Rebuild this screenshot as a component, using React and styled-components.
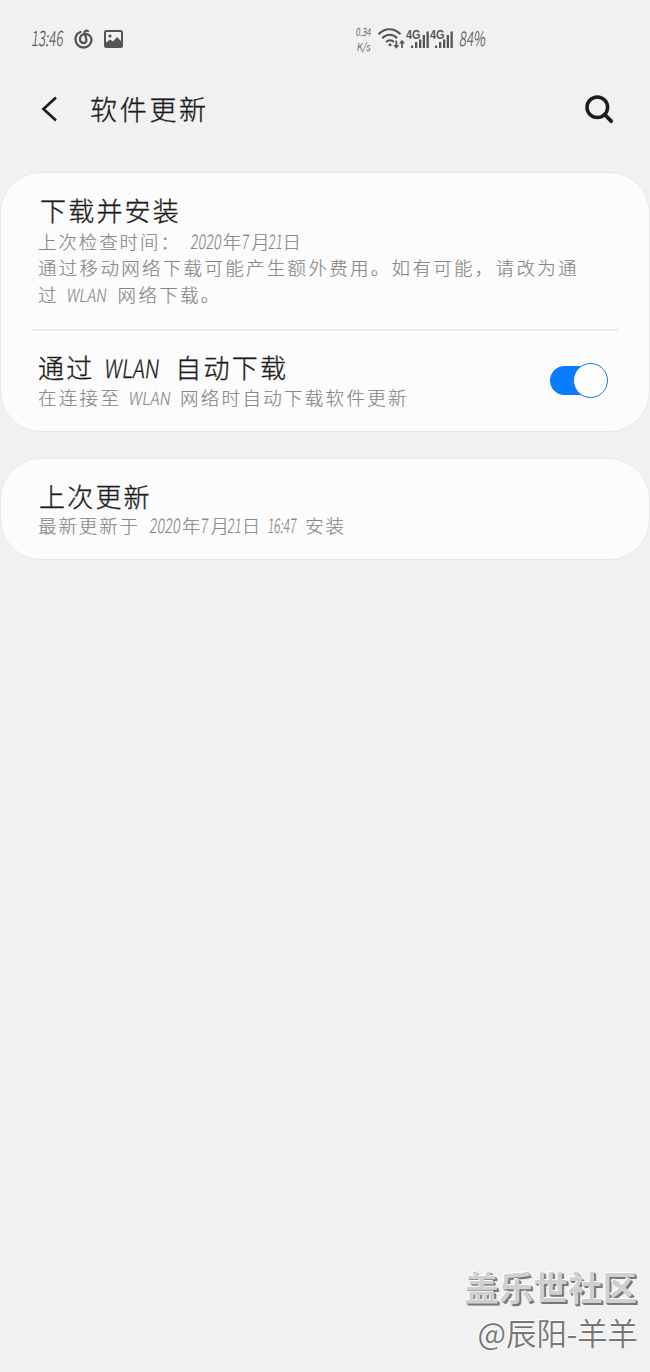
import React from 'react';
import styled, { createGlobalStyle } from 'styled-components';

const Global = createGlobalStyle`
  * { box-sizing: border-box; }
  body { margin: 0; background: #f1f1f1; }
`;

const Screen = styled.div`
  height: 1372px;
  width: 650px;
  display: flex;
  flex-direction: column;
  background: #f1f1f1;
  font-family: 'Noto Sans CJK SC', sans-serif;
  font-weight: 300;
  color: #1c1c1c;
  overflow: hidden;
`;

const StatusBar = styled.div`
  height: 78px;
  flex: none;
  display: flex;
  align-items: center;
  padding: 0 163px 0 32px;
  color: #555;
`;

const Clock = styled.div`
  padding-bottom: 4px;
  -webkit-text-stroke: 0.2px currentColor;
`;

const StatusIcons = styled.div`
  display: flex;
  align-items: center;
  margin-left: ${(p) => p.$left || 0}px;
  gap: ${(p) => p.$gap || 0}px;
`;

const Speed = styled.div`
  display: flex;
  flex-direction: column;
  align-items: center;
  width: 17px;
  margin-right: 7px;
  margin-left: auto;
  padding-bottom: 3px;
  line-height: 13px;
  -webkit-text-stroke: 0.15px currentColor;
`;

/* Narrow slanted run of Latin letters or digits, set in a box of fixed width */
const LatinBox = styled.span`
  display: inline-block;
  width: ${(p) => p.$w}px;
  margin: 0 ${(p) => p.$after || 0}px 0 ${(p) => p.$before || 0}px;
  white-space: nowrap;
  letter-spacing: 0;
`;
const LatinRun = styled.span`
  display: inline-block;
  font-size: ${(p) => p.$size}px;
  transform: scaleX(${(p) => p.$scale}) skewX(-9deg);
  transform-origin: left center;
`;
const Latin = ({ w, before, after, size, scale, children }) => (
  <LatinBox $w={w} $before={before} $after={after}>
    <LatinRun $size={size} $scale={scale}>{children}</LatinRun>
  </LatinBox>
);

const Header = styled.header`
  height: 94px;
  flex: none;
  display: flex;
  align-items: flex-start;
  padding: 15px 36px 0 41px;
`;

const IconButton = styled.button`
  display: flex;
  align-items: center;
  height: 32px;
  padding: 0;
  border: 0;
  background: none;
  color: #1c1c1c;
`;

const Heading = styled.h1`
  margin: 0 auto 0 32px;
  font-size: 27px;
  font-weight: 300;
  line-height: 32px;
  letter-spacing: 2.7px;
  -webkit-text-stroke: 0.35px currentColor;
`;

const Card = styled.section`
  flex: none;
  height: ${(p) => p.$height}px;
  margin-bottom: 26px;
  padding: ${(p) => p.$top}px 31px 0;
  border: 1px solid #e8e8e8;
  border-radius: 41px;
  background: #fcfcfc;
`;

const Row = styled.div`
  display: flex;
  align-items: flex-start;
  justify-content: space-between;
  padding: 0 10px 0 6px;
`;

const Title = styled.h2`
  margin: 0;
  padding-left: ${(p) => p.$indent || 0}px;
  font-size: 26px;
  font-weight: 300;
  line-height: 30px;
  height: ${(p) => p.$height || 32}px;
  letter-spacing: 2.2px;
  white-space: nowrap;
  -webkit-text-stroke: 0.35px currentColor;
`;

const Summary = styled.p`
  margin: 0;
  height: 27px;
  font-size: 18.5px;
  line-height: 27px;
  letter-spacing: ${(p) => p.$track || 2.3}px;
  color: #868686;
  white-space: nowrap;
  -webkit-text-stroke: 0.15px currentColor;
`;

const Divider = styled.div`
  height: 2px;
  margin: 21px 0;
  background: #ebebeb;
`;

const Switch = styled.div`
  width: 55px;
  height: 29px;
  margin: 14px 3px 0 0;
  border-radius: 15px;
  background: #0a7cff;
  display: flex;
  align-items: center;
  justify-content: flex-end;
`;
const Knob = styled.div`
  flex: none;
  width: 35px;
  height: 35px;
  margin-right: -3px;
  border: 1.5px solid #1678d8;
  border-radius: 50%;
  background: #fdfdfd;
`;

const Watermark = styled.footer`
  margin-top: auto;
  padding: 0 12px 17px 0;
  display: flex;
  flex-direction: column;
  align-items: flex-end;
  white-space: nowrap;
`;
const Community = styled.div`
  margin-right: 1px;
  font-size: 34.5px;
  line-height: 46px;
  font-weight: 700;
  color: #d0d0d0;
  text-shadow: -1px -1px 0 #fff, 1px 1px 0 #777, 2px 2px 0 #777;
`;
const Author = styled.div`
  font-size: 30.4px;
  line-height: 46px;
  font-weight: 350;
  color: #777;
  text-shadow: -1px -1px 0 #fff;
`;

const MusicIcon = () => (
  <svg width="19" height="20" viewBox="0 0 19 20" fill="none" stroke="currentColor" strokeWidth="2.300" strokeLinecap="round">
    <path d="M6.500 3C3.500 4 1.500 7 1.500 10.500c0 4.500 3.500 8 8 8s8-3.500 8-7.500c0-3.700-3-6-6.300-6-3.200 0-5.200 2.200-5.200 5.100 0 2.300 1.500 3.900 3.500 3.900s3.300-1.600 2.800-3.700L10.700 4c-.4-1.900 1.400-3.100 3.300-1.900" />
  </svg>
);
const PictureIcon = () => (
  <svg width="19" height="18" viewBox="0 0 19 18">
    <rect x="1" y="1" width="17" height="16" rx="1.500" fill="none" stroke="currentColor" strokeWidth="2" />
    <circle cx="6" cy="6" r="1.600" fill="currentColor" />
    <path d="M2 12.500l4-3 3 2L13 7l5 5v5H2z" fill="currentColor" />
  </svg>
);
const WifiIcon = () => (
  <svg width="26" height="22" viewBox="0 0 26 22" overflow="visible" fill="none" stroke="currentColor" strokeWidth="2">
    <path d="M-.5 6.300C6-.4 15-.4 21.500 6.300M3.300 10.200c4.300-4.500 10.500-4.500 14.800 0M7 14c2.300-2.500 5.700-2.500 8 0" />
    <circle cx="11" cy="16.800" r="1.500" fill="currentColor" stroke="none" />
    <path d="M17.300 12.500v6M23 20v-6" strokeWidth="1.700" />
    <path d="M14.300 17h6l-3 3.800zM20 15.500h6l-3-3.800z" fill="currentColor" stroke="none" />
  </svg>
);
const Signal = styled.div`
  width: 22px;
  height: 20px;
  display: grid;
  margin-right: 2px;
  > * { grid-area: 1 / 1; }
`;
const Network = styled.span`
  font: 700 12px/12px 'Liberation Sans', sans-serif;
  transform: translateX(-1px) scaleX(0.9);
  transform-origin: left;
`;
const SignalIcon = () => (
  <Signal>
    <svg width="22" height="20" viewBox="0 0 22 20" fill="currentColor">
      <path d="M4 16.500h2.200V19H4zM8 13h2.300v6H8zM12 10.500h2.300V19H12zM15.700 6h2.300v13h-2.300zM19.500 2.500h2.300V19h-2.300z" />
    </svg>
    <Network>4G</Network>
  </Signal>
);
const BackIcon = () => (
  <svg width="17" height="26" viewBox="0 0 17 26" fill="none" stroke="currentColor" strokeWidth="2.700">
    <path d="M15 1.500L2.500 13 15 24.500" />
  </svg>
);
const SearchIcon = () => (
  <svg width="29" height="29" viewBox="0 0 29 29" fill="none" stroke="currentColor" strokeWidth="3.500" strokeLinecap="round">
    <circle cx="12.300" cy="12.300" r="10.300" />
    <path d="M19.700 19.700l6.500 6.500" strokeWidth="3.800" />
  </svg>
);

const DateText = () => (
  <>
    <Latin w={32} size={20} scale={0.72} before={4}>2020</Latin>年
    <Latin w={9} size={20} scale={0.7} before={-1}>7</Latin>月
    <Latin w={14} size={20} scale={0.65} before={-3}>21</Latin>日
  </>
);

export default function App() {
  return (
    <Screen>
      <Global />
      <StatusBar>
        <Clock><Latin w={33} size={21} scale={0.63}>13:46</Latin></Clock>
        <StatusIcons $left={9} $gap={11}><MusicIcon /><PictureIcon /></StatusIcons>
        <Speed>
          <Latin w={15} size={11} scale={0.75}>0.34</Latin>
          <Latin w={13} size={11} scale={0.85}>K/s</Latin>
        </Speed>
        <StatusIcons $gap={2}><WifiIcon /><StatusIcons><SignalIcon /><SignalIcon /></StatusIcons></StatusIcons>
        <Clock><Latin w={27} before={5} size={20} scale={0.66}>84%</Latin></Clock>
      </StatusBar>
      <Header>
        <IconButton aria-label="返回"><BackIcon /></IconButton>
        <Heading>软件更新</Heading>
        <IconButton aria-label="搜索"><SearchIcon /></IconButton>
      </Header>
      <Card $height={260} $top={22}>
        <Row>
          <div>
            <Title $indent={2}>下载并安装</Title>
            <Summary $track={1.9}>上次检查时间： <DateText /></Summary>
            <Summary>通过移动网络下载可能产生额外费用。如有可能，请改为通</Summary>
            <Summary>过 <Latin w={40} size={18} scale={0.83} before={2} after={4}>WLAN</Latin> 网络下载。</Summary>
          </div>
        </Row>
        <Divider />
        <Row>
          <div>
            <Title>通过 <Latin w={57} size={25} scale={0.82} before={3} after={5}>WLAN</Latin> 自动下载</Title>
            <Summary>在连接至 <Latin w={43} size={18} scale={0.87} before={1} after={2}>WLAN</Latin> 网络时自动下载软件更新</Summary>
          </div>
          <Switch role="switch" aria-checked="true"><Knob /></Switch>
        </Row>
      </Card>
      <Card $height={102} $top={22}>
        <Row>
          <div>
            <Title $indent={1} $height={30}>上次更新</Title>
            <Summary $track={1.9}>最新更新于 <DateText /> <Latin w={29} size={20} scale={0.6} before={0} after={2}>16:47</Latin> 安装</Summary>
          </div>
        </Row>
      </Card>
      <Watermark>
        <Community>盖乐世社区</Community>
        <Author>@辰阳-羊羊</Author>
      </Watermark>
    </Screen>
  );
}
